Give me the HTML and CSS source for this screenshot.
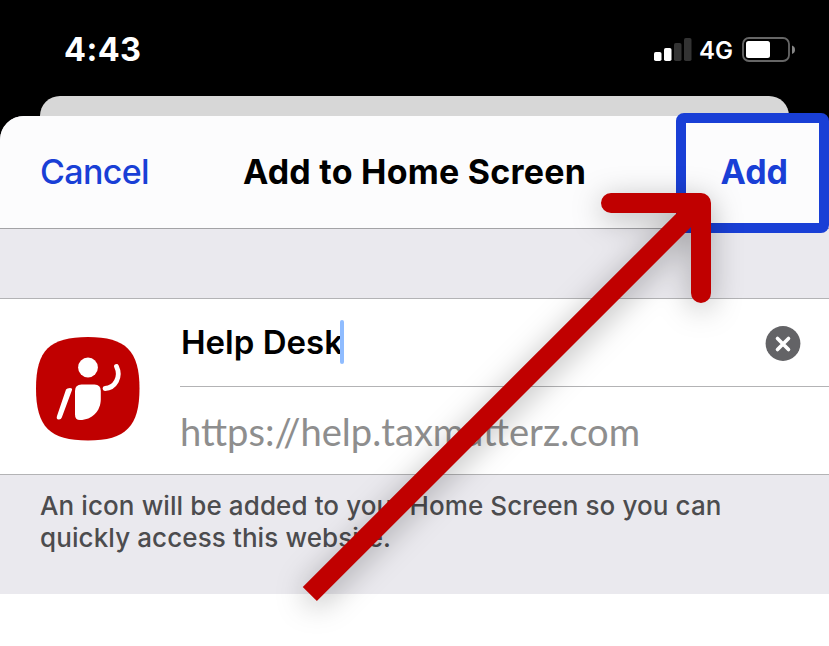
FILE: index.html
```html
<!DOCTYPE html>
<html lang="en">
<head>
<meta charset="utf-8">
<title>Add to Home Screen</title>
<link rel="stylesheet" href="styles.css">
</head>
<body>
<main class="phone">
  <header class="status">
    <span class="time">4:43</span>
    <div class="indicators">
      <svg class="signal" width="38" height="24" viewBox="0 0 38 24">
        <rect x="0" y="14" width="7.5" height="9" rx="1.8" fill="#fff"/>
        <rect x="10" y="10" width="7.5" height="13" rx="1.8" fill="#fff"/>
        <rect x="20" y="5" width="7.5" height="18" rx="1.8" fill="#333"/>
        <rect x="30" y="0" width="7.5" height="23" rx="1.8" fill="#333"/>
      </svg>
      <span class="network">4G</span>
      <svg class="battery" width="54" height="26" viewBox="0 0 54 26">
        <rect x="1" y="1" width="46" height="23" rx="6" fill="none" stroke="#666" stroke-width="1.8"/>
        <rect x="4" y="4" width="24" height="17" rx="2.5" fill="#fff"/>
        <path d="M50 8.5Q53 9.5 53 12.7T50 17Z" fill="#858585"/>
      </svg>
    </div>
  </header>
  <div class="back-card"></div>
  <section class="sheet">
    <nav class="bar">
      <span class="cancel">Cancel</span>
      <h1 class="title">Add to Home Screen</h1>
      <span class="add">Add</span>
    </nav>
    <div class="form">
      <svg class="app-icon" width="104" height="104" viewBox="0 0 104 104">
        <path d="M52 0C90 0 103.500 14 103.500 51.500S90 103.500 52 103.500 0 90 0 51.500 14 0 52 0Z" fill="#c00000"/>
        <circle cx="52" cy="30.500" r="9.900" fill="#fff"/>
        <path d="M45.500 47.500H58.500Q64.800 47.500 64.800 54V62C64.800 74 56 83 44 83Q39 83 39 77.500V54Q39 47.500 45.500 47.500Z" fill="#fff"/>
        <path d="M30 52.500Q31 51 34 51Q36.500 51 36 53L25.800 80.500Q25 82.800 22.500 82.500T21 79Z" fill="#fff"/>
        <path d="M80.500 29.500C85.500 40 79 51 69 51.500" fill="none" stroke="#fff" stroke-width="4.800" stroke-linecap="round"/>
      </svg>
      <div class="fields">
        <div class="field name-field">
          <span class="name">Help Desk</span><i class="caret"></i>
          <svg class="clear" width="36" height="36" viewBox="0 0 36 36">
            <circle cx="18" cy="17.500" r="17.400" fill="#636366"/>
            <path d="M12.500 12.500L23.500 23.500M23.500 12.500L12.500 23.500" stroke="#fff" stroke-width="3.600" stroke-linecap="round"/>
          </svg>
        </div>
        <div class="field url-field"><span class="url">https://help.taxmatterz.com</span></div>
      </div>
    </div>
    <p class="hint">An icon will be added to your Home Screen so you can<br>quickly access this website.</p>
  </section>
  <div class="highlight"></div>
  <svg class="arrow" width="829" height="646" viewBox="0 0 829 646">
    <g fill="none" stroke="#c00000" stroke-width="20">
      <path d="M309.800 594L701 203"/>
      <path d="M611 203H701V293" stroke-linecap="round" stroke-linejoin="round"/>
    </g>
  </svg>
</main>
</body>
</html>
```
FILE: styles.css
```css
* { box-sizing: border-box; }
body { margin: 0; background: #fff; font-family: Inter, "Liberation Sans", sans-serif; }
.phone { position: relative; width: 829px; height: 646px; overflow: hidden; background: linear-gradient(#000 140px, #fff 140px); }
.phone span, .title { white-space: nowrap; }
.status { height: 96px; padding: 0 33px 0 64px; display: flex; justify-content: space-between; }
.time { color: #fff; font-size: 32.500px; font-weight: 750; line-height: 40px; margin-top: 30px; letter-spacing: 0.4px; }
.indicators { display: flex; margin-top: 38px; height: 26px; }
.signal { flex: none; margin-right: 8px; }
.network { color: #fff; font-size: 24px; font-weight: 600; line-height: 26px; width: 43px; margin-left: -1px; }
.battery { flex: none; margin-top: -1px; }
.back-card { height: 20px; margin: 0 40px; border-radius: 20px 20px 0 0; background: #d7d7d7; }
.sheet { height: 478px; border-radius: 24px 24px 0 0; background: #eae9ee; overflow: hidden; }
.bar { height: 113px; padding: 0 40px; display: grid; grid-template-columns: 1fr auto 1fr; align-items: center; background: #fcfcfd; border-bottom: 1px solid #a3a3a6; line-height: 40px; font-size: 34px; }
.cancel, .add { color: #193fd6; }
.cancel { font-weight: 500; letter-spacing: -0.650px; }
.add { font-weight: 750; justify-self: end; padding-right: 1px; }
.title { margin: 0; font-size: 34px; font-weight: 750; letter-spacing: 0.230px; color: #000; }
.form { margin-top: 69px; height: 177px; display: flex; background: #fff; border-top: 1px solid #b3b3b5; border-bottom: 1px solid #b3b3b5; }
.app-icon { flex: none; margin: 38px 40px 0 36px; }
.fields { flex: 1; }
.field { display: flex; align-items: center; }
.name-field { height: 88px; border-bottom: 1px solid #b3b3b5; padding-right: 28px; }
.name { font-size: 33px; font-weight: 600; color: #000; margin: -2px 0 0 1px; }
.caret { width: 4px; height: 44px; border-radius: 2px; background: #8fbcff; margin: -1px 0 0 -3px; }
.clear { margin-left: auto; margin-top: 2px; }
.url-field { height: 87px; }
.url { font-family: Lato, sans-serif; color: #8e8e8e; font-size: 38.150px; }
.hint { margin: 15px 0 0 40px; font-size: 26px; line-height: 32px; font-weight: 550; letter-spacing: 0.1px; color: #4c4c4e; white-space: nowrap; }
.highlight { position: absolute; left: 676px; top: 113px; width: 153px; height: 120px; border: 10px solid #193fd6; border-radius: 8px; }
.arrow { position: absolute; left: 0; top: 0; filter: drop-shadow(0 6px 15px rgba(0, 0, 0, 0.3)); }
```
